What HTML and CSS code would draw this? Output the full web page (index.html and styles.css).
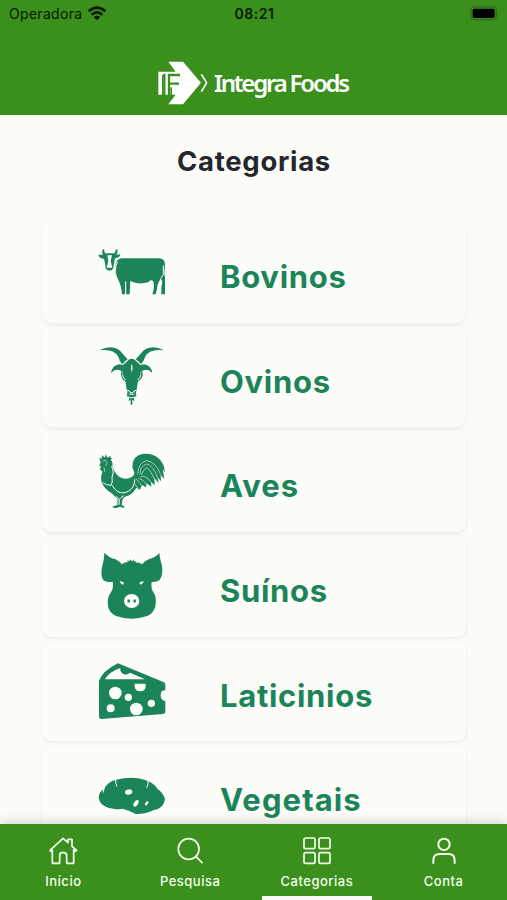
FILE: index.html
```html
<!DOCTYPE html>
<html lang="pt-BR">
<head>
    <meta charset="UTF-8">
    <meta name="viewport" content="width=device-width, initial-scale=1.0">
    <title>Integra Foods</title>
    <link rel="stylesheet" href="styles.css">
</head>
<body>
    <!-- Header -->
    <header class="header">
        <div class="status-bar">
            <div class="carrier">
                <span>Operadora</span>
                <svg class="wifi" viewBox="0 0 60 45">
                    <path d="M5 16Q30 -6 55 16" stroke-width="8"/>
                    <path d="M14 26Q30 12 46 26" stroke-width="8"/>
                    <path d="M20 33Q30 25 40 33L30 43Z" fill="#071a03" stroke="none"/>
                </svg>
            </div>
            <span class="time">08:21</span>
            <div class="battery">
                <svg viewBox="0 0 90 45">
                    <rect x="3" y="3" width="76" height="38" rx="10" fill="none" stroke="#2d7216" stroke-width="4"/>
                    <rect x="8" y="8" width="66" height="28" rx="5"/>
                    <path d="M83 16q6 6 0 12z" fill="#2d7216"/>
                </svg>
            </div>
        </div>
        <div class="brand">
            <svg class="brand-mark" viewBox="24 20 150 130">
                <path fill="#fff" d="M55 21H99L153 84L99 149H55L77 120H25V51H77Z"/>
                <path fill="none" stroke="#3b8f1d" stroke-width="7" d="M43 57V121M57 121V61H90M57 87H87"/>
                <path fill="#3b8f1d" d="M61 98H66V121H61ZM36 61H40V121H36Z"/>
                <path fill="none" stroke="#fff" stroke-width="5" d="M154 59L170 84L154 111"/>
            </svg>
            <span class="brand-name">Integra Foods</span>
        </div>
    </header>

    <!-- Category list -->
    <main class="content">
        <h1>Categorias</h1>
        <div class="category-list">
            <div class="card">
                <svg class="card-icon" viewBox="0 -9 270 240">
                    <path d="M39 42L43 44Q42 55 50 55H69Q76 55 77 44L82 43Q84 53 79 59L91 58Q90 68 75 70L71 91Q71 107 59 107Q46 107 46 91L42 71Q27 70 25 59L39 59Q34 53 39 42Z"/>
                    <path class="cut" d="M52 61H66L62 78L67 98H50L55 78Z"/>
                    <path d="M94 70H207Q225 71 225 90L223 117Q226 124 225 140V178H214V155L217 142L212 129L203 149Q201 165 197 178H187Q194 158 190 139Q182 132 175 142Q143 150 121 138L119 178H108L108 140L105 141L105 178H96Q94 153 86 137Q74 115 77 92Q78 72 94 70Z"/>
                    <path class="cut-line" d="M83 80Q76 89 76 109M107 140V178M220 91V119L213 130"/>
                </svg>
                <span class="card-label label-bovinos">Bovinos</span>
            </div>
            <div class="card">
                <svg class="card-icon" viewBox="0 -10 270 240">
                    <path d="M28 30Q73 8 98 40L113 57Q104 62 97 72Q88 62 84 48Q70 24 28 30ZM222 30Q177 8 152 40L137 57Q146 62 153 72Q162 62 166 48Q180 24 222 30Z"/>
                    <path d="M115 59Q125 52 135 59L151 74L162 72Q184 76 187 98Q174 83 157 91L150 96L157 93Q162 110 149 120L144 123L140 147L137 160H113L110 147L106 123Q92 118 93 93L100 96L93 91Q76 83 63 98Q66 76 88 72L99 74Z"/>
                    <path d="M112 157Q117 165 125 163Q133 165 138 157L139 168L132 174L133 182L127 178V193H122V178L116 183L118 174L111 168Z"/>
                    <path class="cut" d="M125 70Q130 80 125 98Q120 83 125 70Z"/>
                    <path class="cut-line" d="M97 96Q97 113 107 119M153 96Q153 113 143 119M111 151Q118 148 121 157H129Q132 148 139 151M113 169Q125 177 137 169"/>
                    <path d="M97 99L106 112M153 99L144 112" fill="none" stroke="#1c8459" stroke-width="3"/>
                </svg>
                <span class="card-label label-ovinos">Ovinos</span>
            </div>
            <div class="card">
                <svg class="card-icon" viewBox="0 -11 270 240">
                    <path d="M32 51Q28 40 29 35L35 40L36 28L44 36L47 26L52 36L62 30L61 37L67 38L62 43Q69 48 67 59Q70 79 87 93Q105 103 120 96Q133 92 133 81L127 64Q127 30 157 25Q187 21 207 39Q223 53 225 81L218 70L223 101L212 87L213 107L202 94L206 113L193 97L194 119L183 108L184 123L170 113L168 125L156 118L150 132L139 126Q127 148 105 153L98 160L95 178L103 182L101 187L90 183L77 188L65 184L82 178L83 161L67 144Q41 130 34 107Q31 91 37 78L30 71L33 61L27 60Z"/>
                    <path class="cut-line thin" d="M38 48L45 43L52 53L46 61M42 65L45 79"/>
                    <path class="cut-line" d="M65 61L70 79L66 96Q69 110 63 119Q47 119 38 110M66 119Q82 146 105 141Q127 135 133 113L134 101M77 152L88 160L87 178M101 150L91 158"/>
                    <path class="cut-line thin" d="M143 86Q146 49 170 45Q197 48 212 87M151 85Q148 63 170 55Q190 60 202 94M154 88Q159 72 171 66Q184 77 193 100M151 94Q165 86 183 109M145 98Q158 99 169 116M138 99L155 120M132 112L144 128"/>
                </svg>
                <span class="card-label label-aves">Aves</span>
            </div>
            <div class="card">
                <svg class="card-icon" viewBox="0 3 270 240">
                    <path d="M43 23Q57 38 77 43Q89 49 95 58Q105 51 114 51L111 46L121 49L118 43L128 49L130 43L133 50L139 48L137 53Q149 51 156 58Q164 47 176 43Q195 38 208 24Q209 38 216 62Q220 89 209 105Q200 112 185 111Q182 129 190 142Q201 155 196 185Q189 206 171 213Q125 229 78 213Q58 205 54 184Q50 158 63 142Q71 129 68 110Q44 113 38 103Q31 87 37 63Q43 38 43 23Z"/>
                    <path class="cut" d="M89 108L101 112L101 118Q92 120 89 108ZM161 108L149 112L149 118Q158 120 161 108Z"/>
                    <ellipse class="cut" cx="125" cy="168" rx="23" ry="21"/>
                    <ellipse cx="116" cy="168" rx="4" ry="5"/>
                    <ellipse cx="134" cy="168" rx="4" ry="5"/>
                </svg>
                <span class="card-label label-suinos">Suínos</span>
            </div>
            <div class="card">
                <svg class="card-icon" viewBox="0 -13 270 240">
                    <path d="M27 77Q37 47 84 24L222 81Q226 83 226 89V105Q212 103 212 120Q212 136 226 137V170Q226 175 219 176L34 191Q27 191 27 183Z"/>
                    <path class="cut" d="M45 72Q58 49 91 38Q89 51 102 57Q114 59 120 52L165 72Z"/>
                    <circle class="cut" cx="76" cy="113" r="19"/>
                    <circle class="cut" cx="115" cy="126" r="11"/>
                    <circle class="cut" cx="62" cy="159" r="12"/>
                    <circle class="cut" cx="139" cy="161" r="19"/>
                    <circle class="cut" cx="184" cy="144" r="11"/>
                    <path class="cut" d="M134 85H167V93Q167 108 151 108Q134 108 134 93Z"/>
                </svg>
                <span class="card-label label-laticinios">Laticinios</span>
            </div>
            <div class="card">
                <svg class="card-icon" viewBox="0 -28 270 240">
                    <path d="M26 98Q27 79 41 72Q53 49 78 43Q125 31 163 43Q190 50 202 70Q218 80 225 101Q222 129 192 134Q166 147 137 146Q117 135 98 130Q66 136 44 123Q30 115 26 98Z"/>
                    <path class="cut-line" d="M77 40Q75 52 81 64M174 44Q176 56 170 67M43 67L39 82"/>
                    <ellipse class="cut" cx="116" cy="80" rx="11" ry="8" transform="rotate(-12 116 80)"/>
                    <ellipse class="cut" cx="138" cy="114" rx="6" ry="11" transform="rotate(35 138 114)"/>
                    <ellipse class="cut" cx="170" cy="114" rx="4" ry="7" transform="rotate(40 170 114)"/>
                </svg>
                <span class="card-label label-vegetais">Vegetais</span>
            </div>
        </div>
    </main>

    <!-- Bottom navigation -->
    <nav class="tab-bar">
        <a class="tab">
            <svg viewBox="0 0 90 84">
                <path d="M6 40L45 4L60 17V7H72V28L86 40L82 43L77 39V79H56V56Q56 47 47 47H42Q35 47 35 56V79H13V39L9 43Z"/>
            </svg>
            <span>Início</span>
        </a>
        <a class="tab">
            <svg viewBox="0 0 90 84">
                <circle cx="41" cy="36" r="31"/>
                <path d="M63 59L81 77"/>
            </svg>
            <span>Pesquisa</span>
        </a>
        <a class="tab active">
            <svg viewBox="0 0 90 84">
                <rect x="6" y="3" width="33" height="32" rx="5"/>
                <rect x="51" y="3" width="33" height="32" rx="5"/>
                <rect x="6" y="47" width="33" height="32" rx="5"/>
                <rect x="51" y="47" width="33" height="32" rx="5"/>
            </svg>
            <span>Categorias</span>
        </a>
        <a class="tab">
            <svg viewBox="0 0 90 84" class="user-icon">
                <circle cx="45" cy="22" r="17"/>
                <path d="M13 78V70Q13 51 33 51H58Q77 51 77 70V78"/>
            </svg>
            <span>Conta</span>
        </a>
    </nav>
</body>
</html>
```
FILE: styles.css
```css
* {
    box-sizing: border-box;
}

body {
    margin: 0;
    height: 900px;
    display: flex;
    flex-direction: column;
    overflow: hidden;
    font-family: Inter, sans-serif;
    background-color: #fbfcf7;
}

.header {
    flex: none;
    height: 115px;
    background-color: #3b8f1d;
}

.status-bar {
    display: grid;
    grid-template-columns: 1fr auto 1fr;
    align-items: center;
    height: 27px;
    padding: 0 7px 0 9px;
    color: #071a03;
    font-size: 14px;
}

.carrier {
    display: flex;
    align-items: center;
    gap: 5px;
    letter-spacing: 0.3px;
}

.wifi {
    width: 20px;
    height: 15px;
    fill: none;
    stroke: #071a03;
}

.time {
    font-weight: 600;
    letter-spacing: 0.5px;
}

.battery {
    display: flex;
    justify-content: flex-end;
}

.battery svg {
    width: 30px;
    height: 15px;
}

.brand {
    display: flex;
    align-items: center;
    gap: 6px;
    padding: 34px 0 0 158px;
}

.brand-mark {
    width: 50px;
    height: 44px;
}

.brand-name {
    color: #fff;
    font-family: "Noto Sans", sans-serif;
    font-size: 24px;
    font-weight: 600;
    line-height: 44px;
    letter-spacing: -2.2px;
    white-space: nowrap;
}

.content {
    flex: 1;
    min-height: 0;
    overflow: hidden;
    padding: 29px 41px 0 42px;
}

h1 {
    margin: 0 0 44px;
    color: #25272d;
    font-size: 27.5px;
    line-height: 34px;
    text-align: center;
    letter-spacing: 0.7px;
}

.category-list {
    display: flex;
    flex-direction: column;
    gap: 4px;
}

.card {
    flex: none;
    display: flex;
    align-items: center;
    gap: 40px;
    height: 100.7px;
    padding-left: 48px;
    border-radius: 10px;
    background-color: #fcfdf8;
    box-shadow: 0 2px 4px rgba(0, 0, 0, 0.06);
}

.card-icon {
    width: 90px;
    height: 80px;
    fill: #1c8459;
}

.cut {
    fill: #fcfdf8;
}

.cut-line {
    fill: none;
    stroke: #fcfdf8;
    stroke-width: 3;
}

.cut-line.thin {
    stroke-width: 1.7;
}

.card-label {
    padding-top: 9px;
    color: #1c8459;
    font-size: 31px;
    font-weight: 700;
    line-height: 36px;
    letter-spacing: 0.7px;
}

.label-aves,
.label-vegetais {
    letter-spacing: 1.1px;
}

/* Bottom navigation */
.tab-bar {
    flex: none;
    display: grid;
    grid-template-columns: repeat(4, 1fr);
    height: 76px;
    background-color: #3b8f1d;
    box-shadow: 0 -2px 10px rgba(0, 0, 0, 0.16);
    z-index: 1;
}

.tab {
    display: flex;
    flex-direction: column;
    align-items: center;
    gap: 7px;
    margin: 0 8.5px;
    padding-top: 13px;
    color: #f5ffed;
    font-size: 13px;
    font-weight: 500;
    line-height: 18px;
    letter-spacing: 0.5px;
}

.tab.active {
    border-bottom: 4px solid #fbfcf7;
}

.tab svg {
    flex: none;
    width: 30px;
    height: 28px;
    fill: none;
    stroke: #f5ffed;
    stroke-width: 5;
    stroke-linejoin: round;
    stroke-linecap: round;
}

.tab .user-icon {
    stroke-width: 6;
}
```
